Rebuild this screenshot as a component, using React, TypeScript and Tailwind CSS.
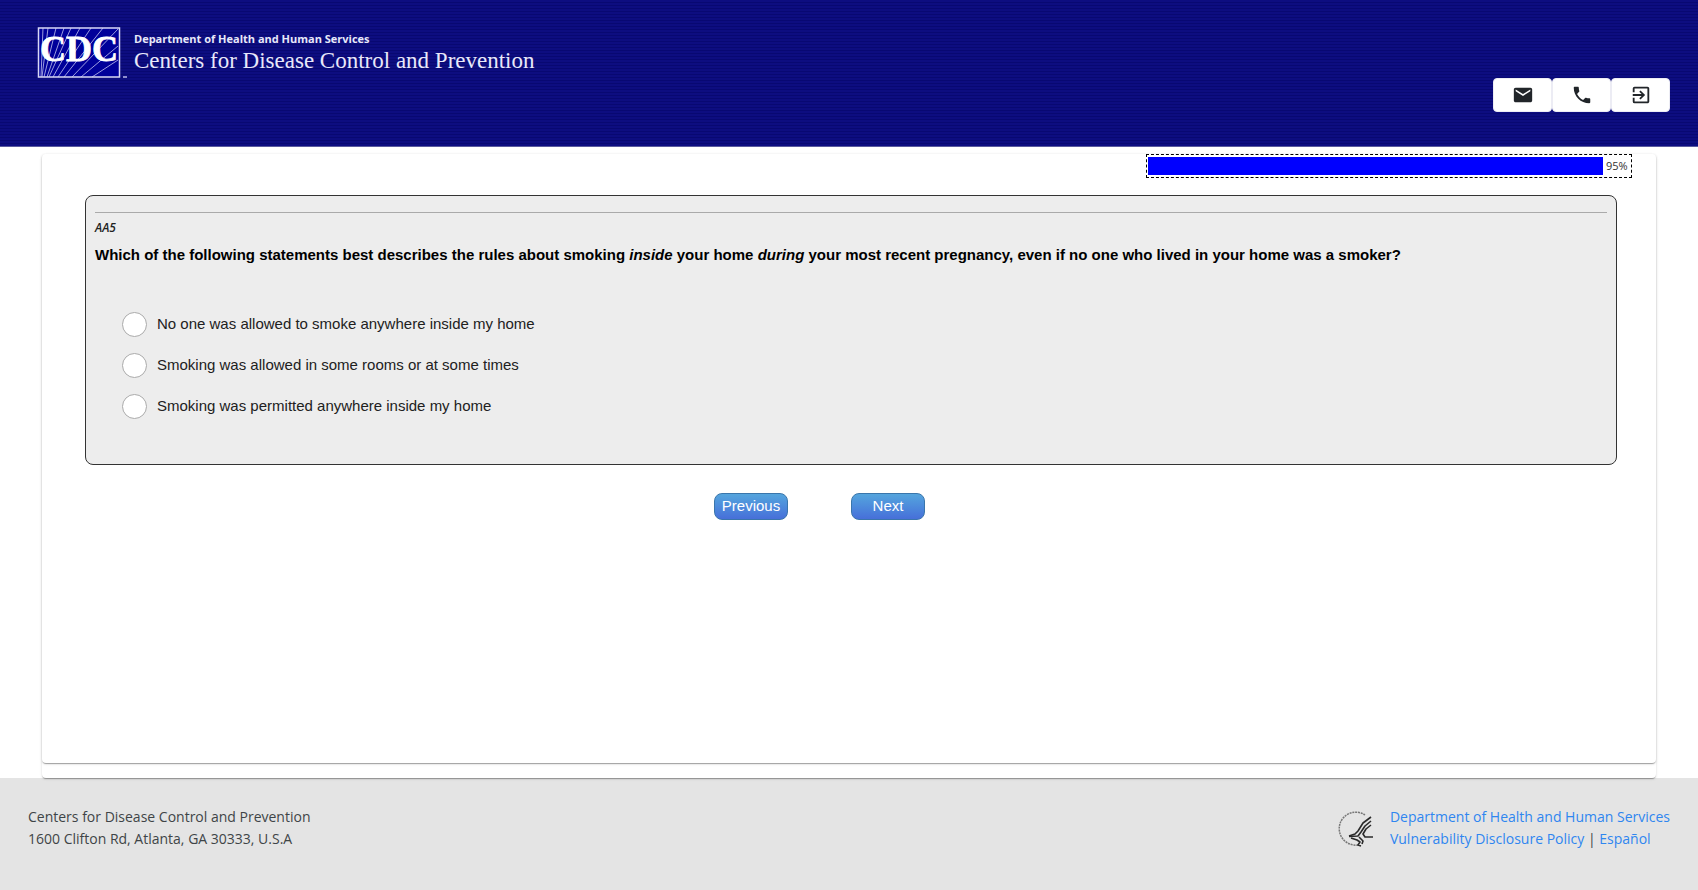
import { MdEmail, MdPhone, MdExitToApp } from "react-icons/md"

const options = [
  "No one was allowed to smoke anywhere inside my home",
  "Smoking was allowed in some rooms or at some times",
  "Smoking was permitted anywhere inside my home",
]

const actions = [
  { label: "Email", icon: MdEmail },
  { label: "Phone", icon: MdPhone },
  { label: "Exit", icon: MdExitToApp },
]

function CdcLogo() {
  return (
    <svg width="90" height="52" viewBox="0 0 90 52" aria-label="CDC" role="img">
      <rect x="1.500" y="1" width="81" height="49" fill="#00009a" />
      <path
        d="M6 1 4 50M11 1 5 50M19 1 7 50M27 1 10 50M34 1 12 50M43 1 16 50M54 1 21 50M66 1 27 50M81 2 35 50M81 19 44 50M81 33 55 50"
        fill="none"
        stroke="#9c9ce0"
      />
      <rect x="1.500" y="1" width="81" height="49" fill="none" stroke="#d8d8f6" strokeWidth="1.5" />
      <text
        x="3"
        y="34"
        fill="#fff"
        stroke="#fff"
        strokeWidth="0.8"
        className="font-['Liberation_Serif',serif] text-[36px] font-bold"
      >
        CDC
      </text>
      <path d="M86 50h4" stroke="#b8b8e8" strokeWidth="1.5" />
    </svg>
  )
}

function HhsLogo() {
  return (
    <svg width="36" height="36" viewBox="0 0 36 36" fill="none" aria-label="HHS" role="img">
      <path d="M27 4A16.500 16.500 0 1 0 20 34" stroke="#777" strokeWidth="1.500" strokeDasharray="2 0.800" />
      <g stroke="#2a2a2a" strokeWidth="1.600" strokeLinejoin="round">
        <path d="M33 6 25 12 20 20 17 23 11 25" />
        <path d="M33 10 27 15 23 21 20 25 11 25.500" />
        <path d="M33 14 28 18 25 23 27 26 35 26" />
        <path d="M13 27 19 29 22 31 20 34 23 35M21 26 25 30 24 33" />
      </g>
    </svg>
  )
}

export default function App() {
  return (
    <div className="flex min-h-screen flex-col bg-white font-['Liberation_Sans',Arial,sans-serif]">
      <header className="flex h-[147px] items-start justify-between border-b border-[#5a5a9e] bg-[#0a0a78] bg-[repeating-linear-gradient(to_bottom,#0d0d80_0px,#0d0d80_2px,#080872_2px,#080872_3px)] pr-7 pl-[37px]">
        <div className="flex gap-[7px] pt-[27px]">
          <CdcLogo />
          <div className="pt-1 text-[#e8e8fa]">
            <p className="font-['Open_Sans',sans-serif] text-[11px] leading-4 font-bold">
              Department of Health and Human Services
            </p>
            <p className="font-['Liberation_Serif',serif] text-[23px] leading-7">
              Centers for Disease Control and Prevention
            </p>
          </div>
        </div>
        <div className="flex pt-[78px]">
          {actions.map(({ label, icon: Icon }) => (
            <button
              key={label}
              aria-label={label}
              className="flex h-[34px] w-[59px] items-center justify-center rounded border border-[#ececf4] bg-white text-[#212529]"
            >
              <Icon size={22} />
            </button>
          ))}
        </div>
      </header>

      <div className="relative mx-[42px] mt-[7px] flex flex-1 flex-col rounded bg-white pb-[15px] shadow-[0_2px_1px_-1px_rgba(0,0,0,0.2),0_1px_1px_0_rgba(0,0,0,0.14),0_1px_3px_0_rgba(0,0,0,0.12)]">
        <main className="flex-1 rounded bg-white pr-[39px] pl-[43px] shadow-[0_2px_1px_-1px_rgba(0,0,0,0.2),0_1px_1px_0_rgba(0,0,0,0.14),0_1px_3px_0_rgba(0,0,0,0.12)]">
          <div className="-mr-[15px] ml-auto flex h-6 w-[486px] items-center gap-[3px] border border-dashed border-black px-px">
            <div className="h-[18px] flex-1 bg-[#0000ff]" />
            <span className="w-6 font-['Open_Sans',sans-serif] text-[11px] text-[#333]">95%</span>
          </div>

          <section className="mt-[17px] rounded-lg border border-[#333] bg-[#ededed] px-[9px] pt-4 pb-[45px]">
            <hr className="border-[#aaa]" />
            <p className="mt-[7px] font-['Open_Sans',sans-serif] text-xs leading-4 font-semibold text-[#222] italic">AA5</p>
            <h1 className="mt-[9px] text-[15px] leading-5 font-bold text-black">
              Which of the following statements best describes the rules about smoking <em>inside</em> your home{" "}
              <em>during</em> your most recent pregnancy, even if no one who lived in your home was a smoker?
            </h1>
            <div className="mt-[47px] flex flex-col gap-4 pl-[27px]">
              {options.map((option) => (
                <label key={option} className="flex items-center gap-[10px] text-[15px] text-[#212121]">
                  <input
                    type="radio"
                    name="aa5"
                    className="h-[25px] w-[25px] appearance-none rounded-full border border-[#aaa] bg-white checked:border-8 checked:border-blue-600"
                  />
                  {option}
                </label>
              ))}
            </div>
          </section>

          <div className="mt-7 flex justify-center gap-[63px] pr-[63px]">
            <button className="h-[27px] w-[74px] rounded-lg border border-[#3a76ac] bg-linear-to-b from-[#55a5dd] to-[#476fd9] text-[15px] text-white">
              Previous
            </button>
            <button className="h-[27px] w-[74px] rounded-lg border border-[#3a76ac] bg-linear-to-b from-[#55a5dd] to-[#476fd9] text-[15px] text-white">
              Next
            </button>
          </div>
        </main>
      </div>

      <footer className="flex h-28 items-start justify-between bg-[#e4e4e4] px-7 pt-7 font-['Open_Sans',sans-serif] text-sm leading-[22px] text-[#3f4447]">
        <address className="not-italic">
          Centers for Disease Control and Prevention
          <br />
          1600 Clifton Rd, Atlanta, GA 30333, U.S.A
        </address>
        <div className="flex gap-4">
          <div className="pt-[5px]">
            <HhsLogo />
          </div>
          <div>
            <a href="#hhs" className="text-[#2f86f0]">Department of Health and Human Services</a>
            <br />
            <a href="#vdp" className="text-[#2f86f0]">Vulnerability Disclosure Policy</a> |{" "}
            <a href="#es" className="text-[#2f86f0]">Español</a>
          </div>
        </div>
      </footer>
    </div>
  )
}
